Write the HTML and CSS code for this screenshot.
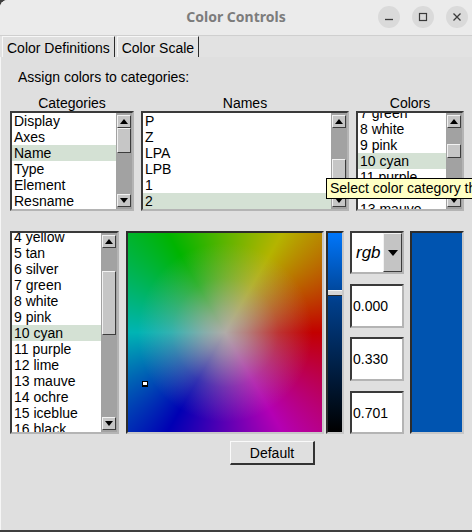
FILE: index.html
```html
<!DOCTYPE html>
<html>
<head>
<meta charset="utf-8">
<title>Color Controls</title>
<link rel="stylesheet" href="styles.css">
</head>
<body>
<div class="window">
  <header class="titlebar">
    <span class="title">Color Controls</span>
    <div class="wctl">
      <span class="wbtn"><svg width="22" height="22" viewBox="0 0 22 22"><path d="M7 13.5H15" stroke="#3a3a3a" stroke-width="1.3" fill="none"/></svg></span>
      <span class="wbtn"><svg width="22" height="22" viewBox="0 0 22 22"><rect x="7.5" y="7.5" width="7" height="7" stroke="#3a3a3a" stroke-width="1.2" fill="none"/></svg></span>
      <span class="wbtn"><svg width="22" height="22" viewBox="0 0 22 22"><path d="M7.5 7.5L14.5 14.5M14.5 7.5L7.5 14.5" stroke="#3a3a3a" stroke-width="1.3" fill="none"/></svg></span>
    </div>
  </header>
  <nav class="tabs">
    <div class="tab sel">Color Definitions</div>
    <div class="tab">Color Scale</div>
  </nav>
  <section class="panel">
    <div class="assign">Assign colors to categories:</div>
    <div class="lists">
      <div class="col">
        <div class="hdr">Categories</div>
        <div class="listbox">
          <ul class="items">
            <li>Display</li>
            <li>Axes</li>
            <li class="hl">Name</li>
            <li>Type</li>
            <li>Element</li>
            <li>Resname</li>
          </ul>
          <div class="sb" style="--pre:0px;--thumb:25px">
            <div class="arrow up"></div><div class="pre"></div><div class="thumb"></div><div class="rest"></div><div class="arrow down"></div>
          </div>
        </div>
      </div>
      <div class="col">
        <div class="hdr">Names</div>
        <div class="listbox">
          <ul class="items">
            <li>P</li>
            <li>Z</li>
            <li>LPA</li>
            <li>LPB</li>
            <li>1</li>
            <li class="hl">2</li>
          </ul>
          <div class="sb" style="--pre:31px;--thumb:35px">
            <div class="arrow up"></div><div class="pre"></div><div class="thumb"></div><div class="rest"></div><div class="arrow down"></div>
          </div>
        </div>
      </div>
      <div class="col">
        <div class="hdr">Colors</div>
        <div class="listbox">
          <ul class="items shift8">
            <li>7 green</li>
            <li>8 white</li>
            <li>9 pink</li>
            <li class="hl">10 cyan</li>
            <li>11 purple</li>
            <li>12 lime</li>
            <li>13 mauve</li>
          </ul>
          <div class="sb" style="--pre:16px;--thumb:14px">
            <div class="arrow up"></div><div class="pre"></div><div class="thumb"></div><div class="rest"></div><div class="arrow down"></div>
          </div>
        </div>
      </div>
    </div>

    <div class="editor">
      <div class="listbox tall">
        <ul class="items shift4">
          <li>4 yellow</li>
          <li>5 tan</li>
          <li>6 silver</li>
          <li>7 green</li>
          <li>8 white</li>
          <li>9 pink</li>
          <li class="hl">10 cyan</li>
          <li>11 purple</li>
          <li>12 lime</li>
          <li>13 mauve</li>
          <li>14 ochre</li>
          <li>15 iceblue</li>
          <li>16 black</li>
        </ul>
        <div class="sb" style="--pre:23px;--thumb:64px">
          <div class="arrow up"></div><div class="pre"></div><div class="thumb"></div><div class="rest"></div><div class="arrow down"></div>
        </div>
      </div>
      <div class="wheel"><span class="marker"></span></div>
      <div class="slider"><span class="knob"></span></div>
      <div class="controls">
        <div class="menubtn"><span class="mode">rgb</span><span class="drop"></span></div>
        <div class="entry">0.000</div>
        <div class="entry">0.330</div>
        <div class="entry">0.701</div>
      </div>
      <div class="swatch"></div>
    </div>

    <div class="actions"><button class="btn">Default</button></div>
  </section>
</div>
<div class="tooltip">Select color category then choose a color</div>
</body>
</html>
```
FILE: styles.css
```css
* { box-sizing: border-box; margin: 0; padding: 0; }

html, body {
  width: 472px;
  height: 532px;
  overflow: hidden;
  background: #3f3f3f;
}

body {
  position: relative;
  font-family: "Liberation Sans", Arial, sans-serif;
  font-size: 14px;
  color: #000;
}

.window {
  height: 530px;
  display: flex;
  flex-direction: column;
  background: #dfdfdf;
  border-top-left-radius: 8px;
  overflow: hidden;
  box-shadow: inset 1px 0 #f6f6f6;
}

/* title bar */
.titlebar {
  height: 36px;
  flex: 0 0 36px;
  background: #ebebeb;
  border-bottom: 1px solid #cfcfcf;
  display: grid;
  grid-template-columns: 1fr auto 1fr;
  align-items: center;
}
.title {
  grid-column: 2;
  font-family: "Noto Sans", "Open Sans", sans-serif;
  font-weight: 700;
  font-size: 14px;
  color: #7c7c7c;
  line-height: 20px;
  margin-top: -2px;
}
.wctl {
  grid-column: 3;
  justify-self: end;
  display: flex;
  gap: 12px;
  padding-right: 4px;
  margin-top: -1px;
}
.wbtn {
  width: 22px;
  height: 22px;
  border-radius: 50%;
  background: #dadada;
  display: block;
}
.wbtn svg { display: block; }

/* tabs */
.tabs {
  flex: 0 0 21px;
  display: flex;
  padding-left: 2px;
  background: #e2e2e2;
}
.tab {
  line-height: 16px;
  padding: 3px 4px 0 4px;
  border-top: 1px solid #f7f7f7;
  border-left: 1px solid #f7f7f7;
  border-right: 1px solid #2c2c2c;
  margin-right: 2px;
  white-space: nowrap;
}
.tab.sel { background: #dfdfdf; }

/* panel */
.panel {
  flex: 1;
  padding: 12px 8px 0 10px;
  display: flex;
  flex-direction: column;
}
.assign {
  line-height: 16px;
  padding-left: 8px;
}
.lists {
  margin-top: 10px;
  display: grid;
  grid-template-columns: 124px 208px 108px;
  column-gap: 7px;
}
.hdr {
  line-height: 16px;
  text-align: center;
}

/* listbox */
.listbox {
  height: 100px;
  border: 2px solid;
  border-color: #3a3a3a #b4b4b4 #b4b4b4 #3a3a3a;
  background: #fff;
  display: grid;
  grid-template-columns: 1fr 16px;
  overflow: hidden;
}
.listbox.tall {
  flex: 0 0 109px;
  height: auto;
}
.items {
  list-style: none;
  overflow: hidden;
  min-width: 0;
}
.items li {
  line-height: 16px;
  height: 16px;
  padding-left: 2px;
  white-space: nowrap;
}
.items li.hl { background: #d4e1d4; }
.items.shift8 li:first-child { margin-top: -8px; }
.items.shift4 li:first-child { margin-top: -4px; }

/* scrollbar */
.sb {
  background: #a2a2a2;
  display: flex;
  flex-direction: column;
  padding: 2px 1px 2px 1px;
}
.arrow, .thumb {
  background: #c6c6c6;
  border: 1px solid;
  border-color: #f2f2f2 #3c3c3c #3c3c3c #f2f2f2;
}
.arrow {
  flex: 0 0 13px;
  display: flex;
  align-items: center;
  justify-content: center;
}
.arrow::after {
  content: "";
  border-left: 4px solid transparent;
  border-right: 4px solid transparent;
}
.arrow.up::after { border-bottom: 5px solid #000; }
.arrow.down::after { border-top: 5px solid #000; }
.pre { flex: 0 0 var(--pre); }
.thumb { flex: 0 0 var(--thumb); }
.rest { flex: 1; }

/* editor row */
.editor {
  margin-top: 20px;
  height: 203px;
  display: flex;
}
.wheel {
  flex: 0 0 198px;
  margin-left: 7px;
  position: relative;
  border: 2px solid;
  border-color: #2c2c2c #c8c8c8 #c8c8c8 #2c2c2c;
  background:
    radial-gradient(closest-side, rgba(176,172,168,1) 0%, rgba(176,172,168,0.75) 22%, rgba(176,172,168,0.3) 55%, rgba(176,172,168,0) 90%),
    conic-gradient(from 0deg, #5cb400 0deg, #b4b400 30deg, #c20000 90deg, #b400b4 150deg, #0000b4 210deg, #00b4b4 270deg, #00b400 330deg, #5cb400 360deg);
}
.marker {
  position: absolute;
  left: 14px;
  top: 148px;
  width: 6px;
  height: 6px;
  background: #fff;
  border: 1px solid #000;
  border-bottom-width: 2px;
}
.slider {
  flex: 0 0 18px;
  margin-left: 2px;
  position: relative;
  border: 2px solid;
  border-color: #2c2c2c #c8c8c8 #c8c8c8 #2c2c2c;
  background: linear-gradient(#0076fa, #003e8a 35%, #000 100%);
}
.knob {
  position: absolute;
  left: 0;
  right: 0;
  top: 57px;
  height: 6px;
  background: #d6d6d6;
  border-top: 1px solid #f4f4f4;
  border-bottom: 1px solid #2a2a2a;
}
.controls {
  flex: 0 0 54px;
  margin-left: 6px;
  display: flex;
  flex-direction: column;
  justify-content: space-between;
}
.menubtn {
  height: 43px;
  border: 2px solid;
  border-color: #3a3a3a #b4b4b4 #b4b4b4 #3a3a3a;
  background: #fff;
  display: flex;
}
.mode {
  flex: 1;
  font-style: italic;
  font-size: 17px;
  line-height: 39px;
  padding-left: 4px;
}
.drop {
  flex: 0 0 19px;
  background: #c4c4c4;
  border: 1px solid;
  border-color: #f2f2f2 #3c3c3c #3c3c3c #f2f2f2;
  display: flex;
  align-items: center;
  justify-content: center;
}
.drop::after {
  content: "";
  border-left: 5px solid transparent;
  border-right: 5px solid transparent;
  border-top: 6px solid #000;
}
.entry {
  height: 44px;
  border: 2px solid;
  border-color: #3a3a3a #b4b4b4 #b4b4b4 #3a3a3a;
  background: #fff;
  line-height: 40px;
  padding-left: 1px;
}
.entry:last-child { height: 43px; }
.swatch {
  flex: 0 0 54px;
  margin-left: 6px;
  border: 2px solid;
  border-color: #2c2c2c #c8c8c8 #c8c8c8 #2c2c2c;
  background: rgb(0, 84, 176);
}

/* default button */
.actions {
  margin-top: 7px;
  padding-left: 220px;
}
.btn {
  width: 85px;
  height: 24px;
  font-family: "Liberation Sans", Arial, sans-serif;
  font-size: 14px;
  color: #000;
  background: #dfdfdf;
  border-style: solid;
  border-width: 1px 2px 2px 1px;
  border-color: #fafafa #333 #333 #fafafa;
}

/* tooltip (clipped at the window's right edge, as in the capture) */
.tooltip {
  position: absolute;
  left: 326px;
  right: 0;
  top: 178px;
  height: 21px;
  line-height: 19px;
  padding: 0 0 0 3px;
  background: #ffffc4;
  border: 1px solid #000;
  border-right: none;
  white-space: nowrap;
  overflow: hidden;
}
```
